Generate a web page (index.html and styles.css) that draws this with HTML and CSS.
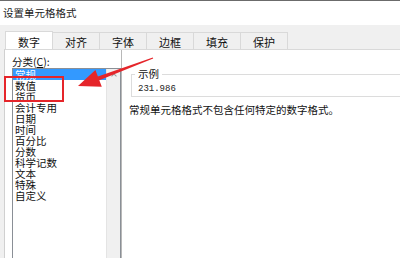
FILE: index.html
```html
<!DOCTYPE html>
<html lang="zh-CN">
<head>
<meta charset="utf-8">
<link rel="stylesheet" href="styles.css">
</head>
<body>
<div class="dialog">
  <div class="titlebar">设置单元格格式</div>
  <div class="tabs">
    <div class="tab active">数字</div>
    <div class="tab">对齐</div>
    <div class="tab">字体</div>
    <div class="tab">边框</div>
    <div class="tab">填充</div>
    <div class="tab">保护</div>
  </div>
  <div class="panel">
    <div class="left">
      <div class="label">分类(<u>C</u>):</div>
      <div class="listbox">
        <ul class="items">
          <li class="selected">常规</li>
          <li>数值</li>
          <li>货币</li>
          <li>会计专用</li>
          <li>日期</li>
          <li>时间</li>
          <li>百分比</li>
          <li>分数</li>
          <li>科学记数</li>
          <li>文本</li>
          <li>特殊</li>
          <li>自定义</li>
        </ul>
        <div class="scrollbar"><span class="up"></span></div>
      </div>
    </div>
    <div class="right">
      <fieldset class="sample">
        <legend>示例</legend>
        <div class="value">231.986</div>
      </fieldset>
      <div class="desc">常规单元格格式不包含任何特定的数字格式。</div>
    </div>
  </div>
  <div class="highlight-box"></div>
  <svg class="arrow" width="400" height="258" viewBox="0 0 400 258">
    <polygon points="78,86 101.8,86.7 99.3,80.2 153.2,58.6 152.8,57.4 97.9,76.4 95.4,69.9" fill="#e5252a"/>
  </svg>
</div>
</body>
</html>
```

FILE: styles.css
```css
* { box-sizing: border-box; }
html, body { margin: 0; padding: 0; }
body {
  width: 400px;
  height: 258px;
  overflow: hidden;
  background: #f0f0f0;
  font-family: "Noto Sans CJK SC", "Noto Sans", sans-serif;
  font-size: 10.5px;
  color: #111;
}
.dialog {
  position: relative;
  width: 400px;
  height: 258px;
  display: flex;
  flex-direction: column;
}
.titlebar {
  height: 25px;
  line-height: 24px;
  background: #fff;
  border-top: 1px solid #6b6b6b;
  padding-left: 3px;
  font-size: 10.5px;
  color: #222;
}
.tabs {
  display: flex;
  margin-top: 7px;
  padding-left: 5px;
  height: 17px;
  position: relative;
  z-index: 1;
}
.tab {
  width: 48px;
  height: 17px;
  border: 1px solid #d9d9d9;
  border-bottom: none;
  margin-left: -1px;
  background: #f0f0f0;
  text-align: center;
  font-size: 11px;
  line-height: 17px;
  padding-top: 1px;
  color: #111;
}
.tab:first-child { margin-left: 0; }
.tab.active {
  background: #fff;
  height: 18px;
  margin-top: -1px;
  padding-top: 2px;
}
.panel {
  flex: 1;
  display: flex;
  background: #fff;
  border-left: 1px solid #d0d0d0;
  border-top: 1px solid #d9d9d9;
  margin-left: 4px;
}
.left {
  width: 116px;
  padding-left: 7px;
  display: flex;
  flex-direction: column;
}
.label {
  margin-top: 5px;
  height: 13px;
  line-height: 13px;
  font-size: 10.5px;
}
.listbox {
  flex: 1;
  display: flex;
  border: 1px solid #8a8f96;
  border-bottom: none;
  background: #fff;
}
.items {
  list-style: none;
  margin: 0;
  padding: 0;
  flex: 1;
}
.items li {
  height: 11px;
  line-height: 11px;
  padding-left: 2px;
  font-size: 10.5px;
  white-space: nowrap;
  color: #111;
}
.items li.selected {
  background: #3399ff;
  color: #fff;
}
.scrollbar {
  width: 14px;
  background: #f0f0f0;
  border-left: 1px solid #e4e4e4;
  display: flex;
  justify-content: center;
  padding-top: 5px;
}
.up {
  width: 4px;
  height: 4px;
  border-left: 1px solid #9a9a9a;
  border-top: 1px solid #9a9a9a;
  transform: rotate(45deg);
}
.right {
  flex: 1;
  padding-left: 7px;
  border-left: 1px solid #b8b8b8;
}
.sample {
  margin: 17px 0 0 2px;
  padding: 3px 6px 1px;
  border: 1px solid #dcdcdc;
  border-right: none;
  min-width: 0;
}
.sample legend {
  padding: 0 3px;
  margin-left: -3px;
  font-size: 10.5px;
  line-height: 14px;
}
.value {
  font-family: "Liberation Mono", "DejaVu Sans Mono", monospace;
  font-size: 9px;
  line-height: 11px;
  color: #222;
}
.desc {
  margin-top: 6px;
  line-height: 13px;
  font-size: 10.5px;
  white-space: nowrap;
}
.highlight-box {
  position: absolute;
  left: 4px;
  top: 76px;
  width: 60px;
  height: 26px;
  border: 2px solid #e5252a;
}
.arrow {
  position: absolute;
  left: 0;
  top: 0;
}
```
